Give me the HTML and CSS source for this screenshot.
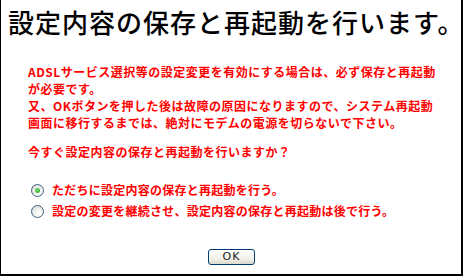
FILE: index.html
```html
<!DOCTYPE html>
<html lang="ja">
<head>
<meta charset="utf-8">
<link rel="stylesheet" href="styles.css">
</head>
<body>
<div class="frame">
  <h1 class="title">設定内容の保存と再起動を行います。</h1>
  <p class="notice">ADSLサービス選択等の設定変更を有効にする場合は、必ず保存と再起動<br>が必要です。<br>又、OKボタンを押した後は故障の原因になりますので、システム再起動<br>画面に移行するまでは、絶対にモデムの電源を切らないで下さい。</p>
  <p class="question">今すぐ設定内容の保存と再起動を行いますか？</p>
  <div class="options">
    <label class="option"><span class="radio checked"></span><span class="opt-text">ただちに設定内容の保存と再起動を行う。</span></label>
    <label class="option"><span class="radio"></span><span class="opt-text">設定の変更を継続させ、設定内容の保存と再起動は後で行う。</span></label>
  </div>
  <div class="actions"><button class="ok" type="button">OK</button></div>
</div>
</body>
</html>
```
FILE: styles.css
```css
html, body {
  margin: 0;
  padding: 0;
  background: #fff;
}
.frame {
  box-sizing: border-box;
  width: 463px;
  height: 276px;
  border-left: 1px solid #000;
  border-right: 2px solid #000;
  border-bottom: 2px solid #000;
  font-family: "Noto Sans CJK JP", sans-serif;
  display: flex;
  flex-direction: column;
}
.title {
  margin: 0;
  padding: 8px 0 0 7px;
  font-size: 26px;
  line-height: 28px;
  font-weight: 500;
  letter-spacing: 1px;
  color: #000;
  white-space: nowrap;
}
.notice, .question {
  margin: 0;
  padding-left: 27px;
  font-size: 12px;
  line-height: 17px;
  font-weight: bold;
  letter-spacing: 0.5px;
  color: #ff0000;
  white-space: nowrap;
}
.notice {
  margin-top: 27px;
}
.question {
  margin-top: 12px;
}
.options {
  margin-top: 23px;
  padding-left: 30px;
  display: flex;
  flex-direction: column;
  gap: 7px;
}
.option {
  display: flex;
  align-items: center;
  height: 14px;
  gap: 8px;
}
.opt-text {
  font-size: 12px;
  line-height: 14px;
  font-weight: bold;
  letter-spacing: 0.25px;
  color: #ff0000;
  white-space: nowrap;
}
.radio {
  box-sizing: border-box;
  width: 13px;
  height: 13px;
  border-radius: 50%;
  border: 1px solid #3c5f83;
  background: radial-gradient(circle at 65% 70%, #fff 0%, #f3f3ef 40%, #d6d6cf 100%);
  position: relative;
  flex: none;
}
.radio.checked::after {
  content: "";
  position: absolute;
  left: 3px;
  top: 3px;
  width: 5px;
  height: 5px;
  border-radius: 50%;
  background: radial-gradient(circle at 40% 40%, #74d974, #21a121);
}
.actions {
  margin-top: 31px;
  display: flex;
  justify-content: center;
  padding-left: 1px;
}
.ok {
  box-sizing: border-box;
  width: 47px;
  height: 16px;
  padding: 0;
  border: 1px solid #003c74;
  border-radius: 3px;
  background: linear-gradient(#ffffff, #f2f1ea 60%, #dcd9cd);
  font-family: "DejaVu Sans", sans-serif;
  font-size: 11px;
  line-height: 14px;
  color: #222;
  letter-spacing: 1px;
}
```
